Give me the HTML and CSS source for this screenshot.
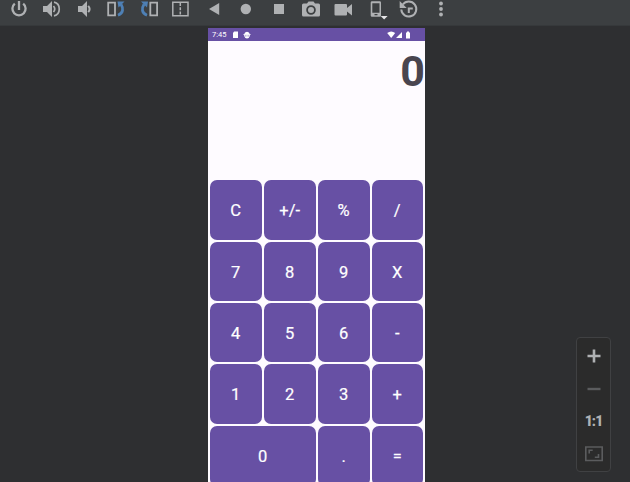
FILE: index.html
```html
<!DOCTYPE html>
<html lang="en">
<head>
<meta charset="utf-8">
<title>Calculator</title>
<link rel="stylesheet" href="styles.css">
</head>
<body>
<header class="toolbar">
  <svg class="tool" viewBox="0 0 24 20"><path class="line" d="M12 1v9M7.8 3.600a6.600 6.600 0 1 0 8.400 0" stroke-width="2.300"/></svg>
  <svg class="tool" viewBox="0 0 24 20"><path d="M4 6h4l5-5v16l-5-5H4z"/><path class="line" d="M14.500 6q2.500 3 0 6M15 2.200c7 1.500 7 12.100 0 13.600" stroke-width="1.700"/></svg>
  <svg class="tool" viewBox="0 0 24 20"><path d="M6 6h4l5-5v16l-5-5H6z"/><path class="line" d="M16.200 5.800q2.800 3.200 0 6.400" stroke-width="2"/></svg>
  <svg class="tool" viewBox="0 0 24 20"><path class="line" d="M4.200 2.700h6.800v12.600H4.200z" stroke-width="1.800"/><path class="turn" d="M14 15.200c5.500-2 5.500-7 3-11"/><path class="tip" d="M13.500 1.500h7l-6 6z"/></svg>
  <svg class="tool" viewBox="0 0 24 20"><path class="line" d="M13.300 2.700h6.800v12.600h-6.800z" stroke-width="1.800"/><path class="turn" d="M10 15.200c-5.500-2-5.500-7-3-11"/><path class="tip" d="M11 1.500H4l6 6z"/></svg>
  <svg class="tool" viewBox="0 0 24 20"><path class="line" d="M3.800 2.300h15.200v13.400H3.800z" stroke-width="1.500"/><path class="line" d="M11.300 3v12.500" stroke-width="1.500" stroke-dasharray="3 1.200"/></svg>
  <svg class="tool" viewBox="0 0 24 20"><path d="M7 9l10.200-6v12z"/></svg>
  <svg class="tool" viewBox="0 0 24 20"><circle cx="11.800" cy="9" r="5.200"/></svg>
  <svg class="tool" viewBox="0 0 24 20"><path d="M7 4h10v10H7z"/></svg>
  <svg class="tool" viewBox="0 0 24 20"><path fill-rule="evenodd" d="M4.500 3.500h3.500L9.500 1.500h5l1.500 2h3.500q1.500 0 1.500 1.500v10q0 1.500-1.500 1.500h-15q-1.500 0-1.500-1.500V5q0-1.500 1.500-1.500zM12 5.200a4.800 4.800 0 1 0 0 9.600 4.800 4.800 0 0 0 0-9.600z"/><circle cx="12" cy="10" r="3"/></svg>
  <svg class="tool" viewBox="0 0 24 20"><path d="M4.500 4H15q1 0 1 1v3l5-4v11.500l-5-4v3q0 1-1 1H4.500q-1 0-1-1V5q0-1 1-1z"/></svg>
  <svg class="tool" viewBox="0 0 24 20"><path fill-rule="evenodd" d="M8 1.200h7.700q1.300 0 1.300 1.300v13q0 1.300-1.300 1.300H8q-1.300 0-1.300-1.300v-13Q6.700 1.200 8 1.200zM8.300 3.200v9.600h7.200V3.200zM10.500 14v1.300h3V14z"/><path class="menu-tip" d="M16.600 15.900h7l-3.500 3.600z"/></svg>
  <svg class="tool" viewBox="0 0 24 20"><path class="line" d="M6.800 4.500a7.500 7.500 0 1 1-1.500 5M12.800 13V8.500h4" stroke-width="2"/><path d="M3.700 1v7h7z"/></svg>
  <svg class="tool" viewBox="0 0 24 20"><circle cx="12" cy="3.500" r="1.900"/><circle cx="12" cy="9" r="1.900"/><circle cx="12" cy="14.500" r="1.900"/></svg>
</header>
<main class="stage">
  <section class="phone">
    <div class="status">
      <span>7:45</span>
      <svg class="notices" viewBox="0 0 20 8"><path d="M2.200.500H6v6.500H1V1.800z"/><path d="M12.200 3.200q.3-2.500 2.800-2.500t2.800 2.500zM12.200 4h5.600v1q-.8 2.500-2.800 2.500T12.200 5z"/><path d="M11.500 3h7v.900h-7z"/><path class="detail" d="M13.200 4.900h1.300M15.500 4.900h1.300"/></svg>
      <svg class="signals" viewBox="0 0 25 8"><path d="M.2 2q4-3 8 0L4.200 7z"/><path d="M9 7l6-6v6zM19 1.500h1V.500h2v1h1V7.500h-4z"/></svg>
    </div>
    <div class="display">0</div>
    <div class="keys">
      <button>C</button><button>+/-</button><button>%</button><button>/</button>
      <button>7</button><button>8</button><button>9</button><button>X</button>
      <button>4</button><button>5</button><button>6</button><button>-</button>
      <button>1</button><button>2</button><button>3</button><button>+</button>
      <button class="wide">0</button><button>.</button><button>=</button>
    </div>
  </section>
  <aside class="zoom">
    <svg viewBox="0 0 20 20"><path class="line" d="M10 3.500v13M3.500 10h13" stroke-width="2.600"/></svg>
    <svg viewBox="0 0 20 20"><path class="dim" d="M3.500 10h13" stroke-width="2.400"/></svg>
    <span>1:1</span>
    <svg viewBox="0 0 20 20"><path class="dim" d="M1.800 3h16.400v13.500H1.800z" stroke-width="1.600"/><path class="dim" d="M5.200 9.500V6.200h3.500M10.800 13.300h3.700V10" stroke-width="1.600"/></svg>
  </aside>
</main>
</body>
</html>
```
FILE: styles.css
```css
* { box-sizing: border-box; }
body {
  margin: 0;
  height: 482px;
  overflow: hidden;
  background: #2e2f31;
  font-family: Roboto, sans-serif;
}
.toolbar {
  display: flex;
  height: 26px;
  padding-left: 2.8px;
  background: #3c3f41;
  border-bottom: 1px solid #36393b;
}
.tool {
  width: 24px;
  height: 20px;
  margin: 0 4.230px;
  flex: none;
  fill: #afb1b3;
}
.line { fill: none; stroke: #afb1b3; }
.turn { fill: none; stroke: #4e80b5; stroke-width: 2.800; }
.tip { fill: #4e80b5; }
.menu-tip { fill: #e4e4e6; }
.stage {
  display: flex;
  justify-content: space-between;
  height: 456px;
  padding: 2px 19px 0 208px;
}
.phone {
  width: 217px;
  height: 454px;
  overflow: hidden;
  background: #fefbff;
}
.status {
  display: flex;
  align-items: center;
  height: 13px;
  padding: 0 13px 0 4px;
  background: #6750a4;
  color: #fff;
  font-size: 7.500px;
}
.status svg { height: 8px; fill: #fff; }
.notices { width: 20px; margin-left: 6px; }
.signals { width: 25px; margin-left: auto; }
.detail { fill: none; stroke: #6750a4; stroke-width: .8; }
.display {
  height: 137px;
  padding-top: 5px;
  color: #49454f;
  font-size: 43px;
  font-weight: 700;
  line-height: 50px;
  text-align: right;
}
.keys {
  display: grid;
  grid-template-columns: 52px 52px 51.800px 51.500px;
  grid-template-rows: 60px 59.200px 59.300px 59.300px 60px;
  gap: 2px;
  padding: 2px 0 0 2px;
}
.keys button {
  padding: 2.400px .6px 0 0;
  border: 0;
  border-radius: 7px;
  background: #6750a4;
  color: #fff;
  font: 400 16.500px/20px Roboto, sans-serif;
  -webkit-text-stroke: .2px #fff;
}
.keys .wide { grid-column: span 2; }
.zoom {
  display: flex;
  flex-direction: column;
  align-items: center;
  width: 35px;
  height: 135px;
  margin-top: 309px;
  padding-top: 8px;
  gap: 12.500px;
  border: 1px solid #404143;
  border-radius: 4px;
  background: #2b2b2b;
}
.zoom svg { width: 20px; height: 20px; flex: none; }
.zoom span {
  height: 20px;
  color: #afb1b3;
  font: 900 14px/20px Roboto, sans-serif;
  letter-spacing: -.900px;
}
.dim { fill: none; stroke: #5b5c5e; }
```
